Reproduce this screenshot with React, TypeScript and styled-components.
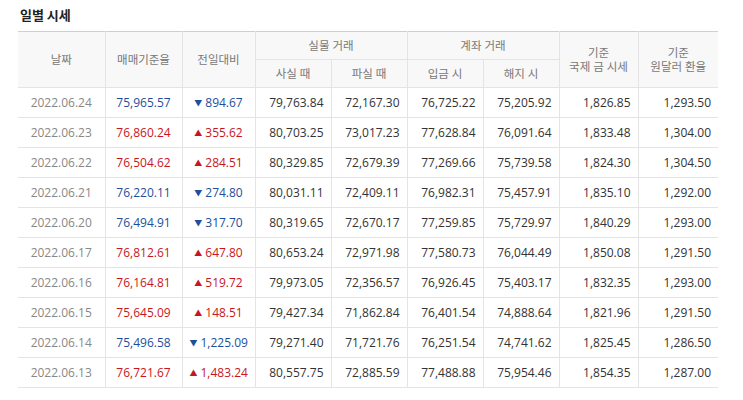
import React from 'react';
import styled, { createGlobalStyle } from 'styled-components';

const Global = createGlobalStyle`
  body { margin: 0; background: #fff; font-family: "Noto Sans CJK KR", "Noto Sans", sans-serif; }
`;

const Page = styled.div`
  padding: 6px 25px 0 18px;
`;

const Title = styled.h3`
  margin: 0 0 7px 2px;
  font-size: 13px;
  font-weight: 700;
  color: #222;
  line-height: 18px;
`;

const Table = styled.table`
  width: 700px;
  border-collapse: collapse;
  table-layout: fixed;
  border-top: 1px solid #cfcfcf;
  font-family: "Open Sans", "Noto Sans CJK KR", sans-serif;
`;

const Th = styled.th`
  background: #f8f8f8;
  color: #777;
  font-size: 11.5px;
  font-weight: 400;
  height: 27px;
  padding: 0;
  line-height: 14px;
  border: 1px solid #e4e4e4;
  border-top: none;
  &:first-child { border-left: none; }
  &:last-child { border-right: none; }
`;

const Td = styled.td<{ $align?: string; $color?: string }>`
  height: 29px;
  padding: 0 7px;
  font-size: 12px;
  line-height: 16px;
  color: ${p => p.$color || '#333'};
  text-align: ${p => p.$align || 'right'};
  border: 1px solid #e4e4e4;
  &:first-child { border-left: none; }
  &:last-child { border-right: none; }
`;

const Arrow = styled.span`
  font-size: 8px;
  margin-right: 3px;
  vertical-align: 1px;
`;

const BLUE = '#1d4f9c';
const RED = '#c8161d';

const rows: [string, string, string, string, string, string, string, string, string][] = [
  ['2022.06.24', '75,965.57', '-894.67', '79,763.84', '72,167.30', '76,725.22', '75,205.92', '1,826.85', '1,293.50'],
  ['2022.06.23', '76,860.24', '+355.62', '80,703.25', '73,017.23', '77,628.84', '76,091.64', '1,833.48', '1,304.00'],
  ['2022.06.22', '76,504.62', '+284.51', '80,329.85', '72,679.39', '77,269.66', '75,739.58', '1,824.30', '1,304.50'],
  ['2022.06.21', '76,220.11', '-274.80', '80,031.11', '72,409.11', '76,982.31', '75,457.91', '1,835.10', '1,292.00'],
  ['2022.06.20', '76,494.91', '-317.70', '80,319.65', '72,670.17', '77,259.85', '75,729.97', '1,840.29', '1,293.00'],
  ['2022.06.17', '76,812.61', '+647.80', '80,653.24', '72,971.98', '77,580.73', '76,044.49', '1,850.08', '1,291.50'],
  ['2022.06.16', '76,164.81', '+519.72', '79,973.05', '72,356.57', '76,926.45', '75,403.17', '1,832.35', '1,293.00'],
  ['2022.06.15', '75,645.09', '+148.51', '79,427.34', '71,862.84', '76,401.54', '74,888.64', '1,821.96', '1,291.50'],
  ['2022.06.14', '75,496.58', '-1,225.09', '79,271.40', '71,721.76', '76,251.54', '74,741.62', '1,825.45', '1,286.50'],
  ['2022.06.13', '76,721.67', '+1,483.24', '80,557.75', '72,885.59', '77,488.88', '75,954.46', '1,854.35', '1,287.00'],
];

const widths = [87, 77, 73, 76, 76, 76, 76, 79, 80];

export default function App() {
  return (
    <Page>
      <Global />
      <Title>일별 시세</Title>
      <Table>
        <colgroup>
          {widths.map((w, i) => <col key={i} style={{ width: w }} />)}
        </colgroup>
        <thead>
          <tr>
            <Th rowSpan={2}>날짜</Th>
            <Th rowSpan={2}>매매기준율</Th>
            <Th rowSpan={2}>전일대비</Th>
            <Th colSpan={2}>실물 거래</Th>
            <Th colSpan={2}>계좌 거래</Th>
            <Th rowSpan={2}>기준<br />국제 금 시세</Th>
            <Th rowSpan={2}>기준<br />원달러 환율</Th>
          </tr>
          <tr>
            <Th>사실 때</Th>
            <Th>파실 때</Th>
            <Th>입금 시</Th>
            <Th>해지 시</Th>
          </tr>
        </thead>
        <tbody>
          {rows.map(r => {
            const up = r[2].startsWith('+');
            const c = up ? RED : BLUE;
            return (
              <tr key={r[0]}>
                <Td $align="center" $color="#888">{r[0]}</Td>
                <Td $align="center" $color={c}>{r[1]}</Td>
                <Td $align="center" $color={c}>
                  <Arrow>{up ? '▲' : '▼'}</Arrow>{r[2].slice(1)}
                </Td>
                {r.slice(3).map((v, i) => <Td key={i}>{v}</Td>)}
              </tr>
            );
          })}
        </tbody>
      </Table>
    </Page>
  );
}
